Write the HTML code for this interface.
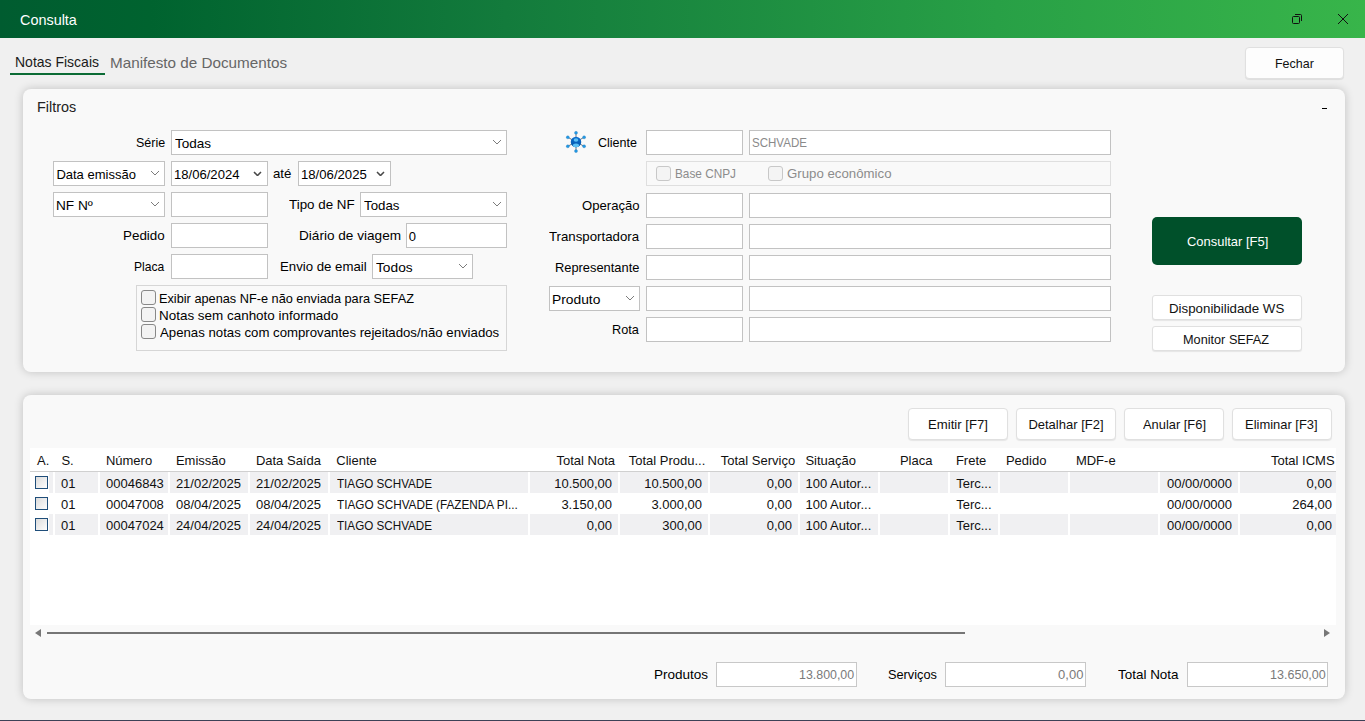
<!DOCTYPE html><html><head><meta charset="utf-8"><style>
html,body{margin:0;padding:0}
body{width:1365px;height:721px;overflow:hidden;position:relative;background:#f0f0f0;font-family:"Liberation Sans",sans-serif}
.t{position:absolute;white-space:pre;font-family:"Liberation Sans",sans-serif}
.b{position:absolute;box-sizing:border-box}
.r{position:absolute}
</style></head><body>
<div class="r" style="left:0;top:0;width:1365px;height:38px;background:linear-gradient(90deg,#005c30 0%,#00632f 11%,#137b3c 37%,#28a046 73%,#38b54a 100%)"></div>
<div class="t" style="top:12px;left:19.53px;font-size:15px;line-height:15px;color:#fff;transform:scaleX(0.9607);transform-origin:0 0;">Consulta</div>
<svg class="r" style="left:1290px;top:12px" width="16" height="14"><rect x="2.5" y="4.5" width="7" height="7" rx="1" fill="none" stroke="#111" stroke-width="1"/><path d="M5 2.5 H10.5 Q11.5 2.5 11.5 3.5 V9" fill="none" stroke="#111" stroke-width="1"/></svg>
<svg class="r" style="left:1337px;top:13px" width="12" height="12"><path d="M1 1 L11 11 M11 1 L1 11" stroke="#111" stroke-width="1"/></svg>
<div class="t" style="top:54px;left:15.28px;font-size:15px;line-height:15px;color:#1a1a1a;transform:scaleX(0.9332);transform-origin:0 0;">Notas Fiscais</div>
<div class="r" style="left:10px;top:73px;width:95px;height:2px;background:#0b6b35;"></div>
<div class="t" style="top:55px;left:110.18px;font-size:15px;line-height:15px;color:#666;transform:scaleX(1.0162);transform-origin:0 0;">Manifesto de Documentos</div>
<div class="b" style="left:1245px;top:47px;width:99px;height:32px;background:#fdfdfd;border:1px solid #e0e0e0;border-radius:4px;box-shadow:0 1px 1px rgba(0,0,0,0.08)"></div>
<div class="t" style="top:57px;left:1274.95px;font-size:13px;line-height:13px;color:#111;transform:scaleX(0.9591);transform-origin:0 0;">Fechar</div>
<div class="r" style="left:23px;top:89px;width:1322px;height:283px;background:#f9f9f9;border-radius:8px;box-shadow:0 0 10px rgba(0,0,0,0.2)"></div>
<div class="t" style="top:99px;left:36.95px;font-size:15px;line-height:15px;color:#222;transform:scaleX(0.9591);transform-origin:0 0;">Filtros</div>
<div class="r" style="left:1322px;top:108px;width:5px;height:1px;background:#000;"></div>
<div class="t" style="top:136px;left:135.62px;font-size:13px;line-height:13px;color:#000;transform:scaleX(0.9589);transform-origin:0 0;">Série</div>
<div class="b" style="left:171px;top:130px;width:336px;height:25px;background:#fff;border:1px solid #c2c2c2;"></div>
<svg class="r" style="left:492.0px;top:139.0px" width="10" height="6"><path d="M1 1 L5.0 5 L9 1" fill="none" stroke="#7c7c7c" stroke-width="1"/></svg>
<div class="t" style="top:137px;left:174.89px;font-size:13px;line-height:13px;color:#000;transform:scaleX(1.0413);transform-origin:0 0;">Todas</div>
<div class="b" style="left:53px;top:161px;width:112px;height:25px;background:#fff;border:1px solid #c2c2c2;"></div>
<svg class="r" style="left:150.0px;top:170.0px" width="10" height="6"><path d="M1 1 L5.0 5 L9 1" fill="none" stroke="#7c7c7c" stroke-width="1"/></svg>
<div class="t" style="top:168px;left:56.40px;font-size:13px;line-height:13px;color:#000;">Data emissão</div>
<div class="b" style="left:171px;top:161px;width:97px;height:25px;background:#fff;border:1px solid #c2c2c2;"></div>
<svg class="r" style="left:253.10000000000002px;top:170.79999999999998px" width="9" height="5.6"><path d="M1 1 L4.5 4.6 L8 1" fill="none" stroke="#484848" stroke-width="1.5"/></svg>
<div class="t" style="top:168px;left:173.89px;font-size:13px;line-height:13px;color:#000;transform:scaleX(1.0063);transform-origin:0 0;">18/06/2024</div>
<div class="t" style="top:167px;left:273.39px;font-size:13px;line-height:13px;color:#000;transform:scaleX(1.0176);transform-origin:0 0;">até</div>
<div class="b" style="left:298px;top:161px;width:93px;height:25px;background:#fff;border:1px solid #c2c2c2;"></div>
<svg class="r" style="left:375.9px;top:170.79999999999998px" width="9" height="5.6"><path d="M1 1 L4.5 4.6 L8 1" fill="none" stroke="#484848" stroke-width="1.5"/></svg>
<div class="t" style="top:168px;left:300.89px;font-size:13px;line-height:13px;color:#000;transform:scaleX(1.0110);transform-origin:0 0;">18/06/2025</div>
<div class="b" style="left:53px;top:192px;width:112px;height:25px;background:#fff;border:1px solid #c2c2c2;"></div>
<svg class="r" style="left:150.0px;top:201.0px" width="10" height="6"><path d="M1 1 L5.0 5 L9 1" fill="none" stroke="#7c7c7c" stroke-width="1"/></svg>
<div class="t" style="top:199px;left:56.34px;font-size:13px;line-height:13px;color:#000;transform:scaleX(1.0503);transform-origin:0 0;">NF Nº</div>
<div class="b" style="left:171px;top:192px;width:97px;height:25px;background:#fff;border:1px solid #c2c2c2;"></div>
<div class="t" style="top:198px;left:289.19px;font-size:13px;line-height:13px;color:#000;transform:scaleX(1.0286);transform-origin:0 0;">Tipo de NF</div>
<div class="b" style="left:360px;top:192px;width:147px;height:25px;background:#fff;border:1px solid #c2c2c2;"></div>
<svg class="r" style="left:492.0px;top:201.0px" width="10" height="6"><path d="M1 1 L5.0 5 L9 1" fill="none" stroke="#7c7c7c" stroke-width="1"/></svg>
<div class="t" style="top:199px;left:364.49px;font-size:13px;line-height:13px;color:#000;transform:scaleX(1.0206);transform-origin:0 0;">Todas</div>
<div class="t" style="top:229px;left:123.27px;font-size:13px;line-height:13px;color:#000;transform:scaleX(1.0309);transform-origin:0 0;">Pedido</div>
<div class="b" style="left:171px;top:223px;width:97px;height:25px;background:#fff;border:1px solid #c2c2c2;"></div>
<div class="t" style="top:229px;left:298.85px;font-size:13px;line-height:13px;color:#000;transform:scaleX(1.0460);transform-origin:0 0;">Diário de viagem</div>
<div class="b" style="left:406px;top:223px;width:101px;height:25px;background:#fff;border:1px solid #c2c2c2;"></div>
<div class="t" style="top:230px;left:408.80px;font-size:13px;line-height:13px;color:#000;">0</div>
<div class="t" style="top:260px;left:134.18px;font-size:13px;line-height:13px;color:#000;transform:scaleX(0.9299);transform-origin:0 0;">Placa</div>
<div class="b" style="left:171px;top:254px;width:97px;height:25px;background:#fff;border:1px solid #c2c2c2;"></div>
<div class="t" style="top:260px;left:279.88px;font-size:13px;line-height:13px;color:#000;transform:scaleX(1.0168);transform-origin:0 0;">Envio de email</div>
<div class="b" style="left:372px;top:254px;width:101px;height:25px;background:#fff;border:1px solid #c2c2c2;"></div>
<svg class="r" style="left:458.0px;top:263.0px" width="10" height="6"><path d="M1 1 L5.0 5 L9 1" fill="none" stroke="#7c7c7c" stroke-width="1"/></svg>
<div class="t" style="top:261px;left:376.28px;font-size:13px;line-height:13px;color:#000;transform:scaleX(1.0560);transform-origin:0 0;">Todos</div>
<div class="b" style="left:136px;top:285px;width:371px;height:66px;background:transparent;border:1px solid #d6d6d6;"></div>
<div class="b" style="left:141px;top:290px;width:15px;height:15px;background:#f3f3f3;border:1px solid #888;border-radius:3px"></div>
<div class="t" style="top:292px;left:159.32px;font-size:13px;line-height:13px;color:#000;transform:scaleX(0.9799);transform-origin:0 0;">Exibir apenas NF-e não enviada para SEFAZ</div>
<div class="b" style="left:141px;top:307px;width:15px;height:15px;background:#f3f3f3;border:1px solid #888;border-radius:3px"></div>
<div class="t" style="top:309px;left:159.26px;font-size:13px;line-height:13px;color:#000;transform:scaleX(1.0338);transform-origin:0 0;">Notas sem canhoto informado</div>
<div class="b" style="left:141px;top:324px;width:15px;height:15px;background:#f3f3f3;border:1px solid #888;border-radius:3px"></div>
<div class="t" style="top:326px;left:160.40px;font-size:13px;line-height:13px;color:#000;transform:scaleX(1.0159);transform-origin:0 0;">Apenas notas com comprovantes rejeitados/não enviados</div>
<svg class="r" style="left:562px;top:128px" width="28" height="28" viewBox="0 0 28 28">
<defs><clipPath id="cc"><circle cx="14" cy="14" r="5.2"/></clipPath>
<linearGradient id="cg" x1="0" y1="0" x2="0" y2="1"><stop offset="0" stop-color="#0a6ed1"/><stop offset="1" stop-color="#0857a8"/></linearGradient></defs>
<g stroke="#6b7b88" stroke-width="1" fill="none"><path d="M14 4.7V23.1M5.8 9.3L22.1 18.3M22.1 9.3L5.8 18.3"/></g>
<g fill="#1d9be8" stroke="#3a7fb8" stroke-width="0.4"><circle cx="14" cy="4.8" r="1.5"/><circle cx="14" cy="23.1" r="1.5"/><circle cx="5.8" cy="9.3" r="1.5"/><circle cx="22.1" cy="9.3" r="1.5"/><circle cx="5.8" cy="18.3" r="1.5"/><circle cx="22.1" cy="18.3" r="1.5"/></g>
<circle cx="14" cy="14" r="5.25" fill="url(#cg)"/>
<g clip-path="url(#cc)" fill="#5cc0f4"><ellipse cx="14" cy="12" rx="2.3" ry="1.8"/><ellipse cx="14" cy="17.6" rx="3.1" ry="2"/></g>
</svg>
<div class="t" style="top:136px;left:598.03px;font-size:13px;line-height:13px;color:#000;transform:scaleX(0.9643);transform-origin:0 0;">Cliente</div>
<div class="b" style="left:646px;top:130px;width:97px;height:25px;background:#fff;border:1px solid #c2c2c2;"></div>
<div class="b" style="left:749px;top:130px;width:362px;height:25px;background:#fff;border:1px solid #c2c2c2;"></div>
<div class="t" style="top:136px;left:751.87px;font-size:13px;line-height:13px;color:#8a8a8a;transform:scaleX(0.8880);transform-origin:0 0;">SCHVADE</div>
<div class="b" style="left:646px;top:161px;width:465px;height:25px;background:#f9f9f9;border:1px solid #dfdfdf;"></div>
<div class="b" style="left:656px;top:166px;width:15px;height:15px;background:#f4f4f4;border:1px solid #c8c8c8;border-radius:3px"></div>
<div class="t" style="top:167px;left:674.60px;font-size:13px;line-height:13px;color:#8c8c8c;transform:scaleX(0.9078);transform-origin:0 0;">Base CNPJ</div>
<div class="b" style="left:768px;top:166px;width:15px;height:15px;background:#f4f4f4;border:1px solid #c8c8c8;border-radius:3px"></div>
<div class="t" style="top:167px;left:786.99px;font-size:13px;line-height:13px;color:#8c8c8c;transform:scaleX(1.0187);transform-origin:0 0;">Grupo econômico</div>
<div class="t" style="top:199px;left:582.09px;font-size:13px;line-height:13px;color:#000;transform:scaleX(1.0089);transform-origin:0 0;">Operação</div>
<div class="b" style="left:646px;top:193px;width:97px;height:25px;background:#fff;border:1px solid #c2c2c2;"></div>
<div class="b" style="left:749px;top:193px;width:362px;height:25px;background:#fff;border:1px solid #c2c2c2;"></div>
<div class="t" style="top:230px;left:549.19px;font-size:13px;line-height:13px;color:#000;transform:scaleX(1.0182);transform-origin:0 0;">Transportadora</div>
<div class="b" style="left:646px;top:224px;width:97px;height:25px;background:#fff;border:1px solid #c2c2c2;"></div>
<div class="b" style="left:749px;top:224px;width:362px;height:25px;background:#fff;border:1px solid #c2c2c2;"></div>
<div class="t" style="top:261px;left:555.31px;font-size:13px;line-height:13px;color:#000;transform:scaleX(0.9892);transform-origin:0 0;">Representante</div>
<div class="b" style="left:646px;top:255px;width:97px;height:25px;background:#fff;border:1px solid #c2c2c2;"></div>
<div class="b" style="left:749px;top:255px;width:362px;height:25px;background:#fff;border:1px solid #c2c2c2;"></div>
<div class="b" style="left:549px;top:286px;width:91px;height:25px;background:#fff;border:1px solid #c2c2c2;"></div>
<svg class="r" style="left:625.0px;top:295.0px" width="10" height="6"><path d="M1 1 L5.0 5 L9 1" fill="none" stroke="#7c7c7c" stroke-width="1"/></svg>
<div class="t" style="top:293px;left:551.73px;font-size:13px;line-height:13px;color:#000;transform:scaleX(1.0615);transform-origin:0 0;">Produto</div>
<div class="b" style="left:646px;top:286px;width:97px;height:25px;background:#fff;border:1px solid #c2c2c2;"></div>
<div class="b" style="left:749px;top:286px;width:362px;height:25px;background:#fff;border:1px solid #c2c2c2;"></div>
<div class="t" style="top:323px;left:612.43px;font-size:13px;line-height:13px;color:#000;transform:scaleX(0.9772);transform-origin:0 0;">Rota</div>
<div class="b" style="left:646px;top:317px;width:97px;height:25px;background:#fff;border:1px solid #c2c2c2;"></div>
<div class="b" style="left:749px;top:317px;width:362px;height:25px;background:#fff;border:1px solid #c2c2c2;"></div>
<div class="r" style="left:1152px;top:217px;width:150px;height:48px;background:#00502a;border-radius:5px"></div>
<div class="t" style="top:235px;left:1186.70px;font-size:13px;line-height:13px;color:#fff;transform:scaleX(0.9950);transform-origin:0 0;">Consultar [F5]</div>
<div class="b" style="left:1152px;top:295px;width:150px;height:25px;background:#fff;border:1px solid #e0e0e0;border-radius:3px;box-shadow:0 1px 1px rgba(0,0,0,0.08)"></div>
<div class="t" style="top:302px;left:1169.08px;font-size:13px;line-height:13px;color:#111;transform:scaleX(1.0225);transform-origin:0 0;">Disponibilidade WS</div>
<div class="b" style="left:1152px;top:326px;width:150px;height:25px;background:#fff;border:1px solid #e0e0e0;border-radius:3px;box-shadow:0 1px 1px rgba(0,0,0,0.08)"></div>
<div class="t" style="top:333px;left:1183.33px;font-size:13px;line-height:13px;color:#111;transform:scaleX(0.9769);transform-origin:0 0;">Monitor SEFAZ</div>
<div class="r" style="left:23px;top:395px;width:1322px;height:304px;background:#f9f9f9;border-radius:8px;box-shadow:0 0 10px rgba(0,0,0,0.2)"></div>
<div class="b" style="left:908px;top:408px;width:100px;height:32px;background:#fff;border:1px solid #e0e0e0;border-radius:4px;box-shadow:0 1px 1px rgba(0,0,0,0.08)"></div>
<div class="t" style="top:418px;left:927.89px;font-size:13px;line-height:13px;color:#111;transform:scaleX(1.0122);transform-origin:0 0;">Emitir [F7]</div>
<div class="b" style="left:1016px;top:408px;width:100px;height:32px;background:#fff;border:1px solid #e0e0e0;border-radius:4px;box-shadow:0 1px 1px rgba(0,0,0,0.08)"></div>
<div class="t" style="top:418px;left:1028.40px;font-size:13px;line-height:13px;color:#111;">Detalhar [F2]</div>
<div class="b" style="left:1124px;top:408px;width:100px;height:32px;background:#fff;border:1px solid #e0e0e0;border-radius:4px;box-shadow:0 1px 1px rgba(0,0,0,0.08)"></div>
<div class="t" style="top:418px;left:1142.90px;font-size:13px;line-height:13px;color:#111;transform:scaleX(0.9904);transform-origin:0 0;">Anular [F6]</div>
<div class="b" style="left:1232px;top:408px;width:100px;height:32px;background:#fff;border:1px solid #e0e0e0;border-radius:4px;box-shadow:0 1px 1px rgba(0,0,0,0.08)"></div>
<div class="t" style="top:418px;left:1244.70px;font-size:13px;line-height:13px;color:#111;transform:scaleX(0.9958);transform-origin:0 0;">Eliminar [F3]</div>
<div class="r" style="left:30px;top:448px;width:1306px;height:177px;background:#fff;"></div>
<div class="r" style="left:30px;top:471px;width:1306px;height:1px;background:#d0d0d0;"></div>
<div class="t" style="top:454px;left:37.00px;font-size:13px;line-height:13px;color:#111;">A.</div>
<div class="t" style="top:454px;left:61.40px;font-size:13px;line-height:13px;color:#111;">S.</div>
<div class="t" style="top:454px;left:105.90px;font-size:13px;line-height:13px;color:#111;">Número</div>
<div class="t" style="top:454px;left:175.90px;font-size:13px;line-height:13px;color:#111;">Emissão</div>
<div class="t" style="top:454px;left:255.90px;font-size:13px;line-height:13px;color:#111;">Data Saída</div>
<div class="t" style="top:454px;left:336.30px;font-size:13px;line-height:13px;color:#111;">Cliente</div>
<div class="t" style="top:454px;left:556.50px;font-size:13px;line-height:13px;color:#111;">Total Nota</div>
<div class="t" style="top:454px;left:628.70px;font-size:13px;line-height:13px;color:#111;">Total Produ...</div>
<div class="t" style="top:454px;left:720.70px;font-size:13px;line-height:13px;color:#111;">Total Serviço</div>
<div class="t" style="top:454px;left:805.40px;font-size:13px;line-height:13px;color:#111;">Situação</div>
<div class="t" style="top:454px;left:899.90px;font-size:13px;line-height:13px;color:#111;">Placa</div>
<div class="t" style="top:454px;left:955.90px;font-size:13px;line-height:13px;color:#111;">Frete</div>
<div class="t" style="top:454px;left:1005.90px;font-size:13px;line-height:13px;color:#111;">Pedido</div>
<div class="t" style="top:454px;left:1075.90px;font-size:13px;line-height:13px;color:#111;">MDF-e</div>
<div class="t" style="top:454px;left:1271.00px;font-size:13px;line-height:13px;color:#111;">Total ICMS</div>
<div class="r" style="left:49px;top:472px;width:4px;height:21px;background:#f0f0f2;"></div>
<div class="r" style="left:55px;top:472px;width:43px;height:21px;background:#f0f0f2;"></div>
<div class="r" style="left:100px;top:472px;width:68px;height:21px;background:#f0f0f2;"></div>
<div class="r" style="left:170px;top:472px;width:78px;height:21px;background:#f0f0f2;"></div>
<div class="r" style="left:250px;top:472px;width:78px;height:21px;background:#f0f0f2;"></div>
<div class="r" style="left:330px;top:472px;width:198px;height:21px;background:#f0f0f2;"></div>
<div class="r" style="left:530px;top:472px;width:88px;height:21px;background:#f0f0f2;"></div>
<div class="r" style="left:620px;top:472px;width:88px;height:21px;background:#f0f0f2;"></div>
<div class="r" style="left:710px;top:472px;width:88px;height:21px;background:#f0f0f2;"></div>
<div class="r" style="left:800px;top:472px;width:78px;height:21px;background:#f0f0f2;"></div>
<div class="r" style="left:880px;top:472px;width:68px;height:21px;background:#f0f0f2;"></div>
<div class="r" style="left:950px;top:472px;width:48px;height:21px;background:#f0f0f2;"></div>
<div class="r" style="left:1000px;top:472px;width:68px;height:21px;background:#f0f0f2;"></div>
<div class="r" style="left:1070px;top:472px;width:88px;height:21px;background:#f0f0f2;"></div>
<div class="r" style="left:1160px;top:472px;width:78px;height:21px;background:#f0f0f2;"></div>
<div class="r" style="left:1240px;top:472px;width:96px;height:21px;background:#f0f0f2;"></div>
<div class="b" style="left:35px;top:476px;width:13px;height:13px;border:1px solid #1f4e7a;background:linear-gradient(135deg,#dcdcdc,#fdfdfd)"></div>
<div class="t" style="top:477px;left:61.00px;font-size:13px;line-height:13px;color:#111;">01</div>
<div class="t" style="top:477px;left:106.00px;font-size:13px;line-height:13px;color:#111;">00046843</div>
<div class="t" style="top:477px;left:175.90px;font-size:13px;line-height:13px;color:#111;">21/02/2025</div>
<div class="t" style="top:477px;left:255.90px;font-size:13px;line-height:13px;color:#111;">21/02/2025</div>
<div class="t" style="top:477px;left:336.73px;font-size:13px;line-height:13px;color:#111;transform:scaleX(0.8972);transform-origin:0 0;">TIAGO SCHVADE</div>
<div class="t" style="top:477px;left:554.20px;font-size:13px;line-height:13px;color:#111;">10.500,00</div>
<div class="t" style="top:477px;left:644.20px;font-size:13px;line-height:13px;color:#111;">10.500,00</div>
<div class="t" style="top:477px;left:766.70px;font-size:13px;line-height:13px;color:#111;">0,00</div>
<div class="t" style="top:477px;left:805.50px;font-size:13px;line-height:13px;color:#111;">100 Autor...</div>
<div class="t" style="top:477px;left:956.20px;font-size:13px;line-height:13px;color:#111;">Terc...</div>
<div class="t" style="top:477px;left:1167.00px;font-size:13px;line-height:13px;color:#111;">00/00/0000</div>
<div class="t" style="top:477px;left:1306.60px;font-size:13px;line-height:13px;color:#111;">0,00</div>
<div class="b" style="left:35px;top:497px;width:13px;height:13px;border:1px solid #1f4e7a;background:linear-gradient(135deg,#dcdcdc,#fdfdfd)"></div>
<div class="t" style="top:498px;left:61.00px;font-size:13px;line-height:13px;color:#111;">01</div>
<div class="t" style="top:498px;left:106.00px;font-size:13px;line-height:13px;color:#111;">00047008</div>
<div class="t" style="top:498px;left:176.00px;font-size:13px;line-height:13px;color:#111;">08/04/2025</div>
<div class="t" style="top:498px;left:256.00px;font-size:13px;line-height:13px;color:#111;">08/04/2025</div>
<div class="t" style="top:498px;left:336.73px;font-size:13px;line-height:13px;color:#111;transform:scaleX(0.9042);transform-origin:0 0;">TIAGO SCHVADE (FAZENDA PI...</div>
<div class="t" style="top:498px;left:561.40px;font-size:13px;line-height:13px;color:#111;">3.150,00</div>
<div class="t" style="top:498px;left:651.40px;font-size:13px;line-height:13px;color:#111;">3.000,00</div>
<div class="t" style="top:498px;left:766.70px;font-size:13px;line-height:13px;color:#111;">0,00</div>
<div class="t" style="top:498px;left:805.50px;font-size:13px;line-height:13px;color:#111;">100 Autor...</div>
<div class="t" style="top:498px;left:956.20px;font-size:13px;line-height:13px;color:#111;">Terc...</div>
<div class="t" style="top:498px;left:1167.00px;font-size:13px;line-height:13px;color:#111;">00/00/0000</div>
<div class="t" style="top:498px;left:1292.20px;font-size:13px;line-height:13px;color:#111;">264,00</div>
<div class="r" style="left:49px;top:514px;width:4px;height:21px;background:#f0f0f2;"></div>
<div class="r" style="left:55px;top:514px;width:43px;height:21px;background:#f0f0f2;"></div>
<div class="r" style="left:100px;top:514px;width:68px;height:21px;background:#f0f0f2;"></div>
<div class="r" style="left:170px;top:514px;width:78px;height:21px;background:#f0f0f2;"></div>
<div class="r" style="left:250px;top:514px;width:78px;height:21px;background:#f0f0f2;"></div>
<div class="r" style="left:330px;top:514px;width:198px;height:21px;background:#f0f0f2;"></div>
<div class="r" style="left:530px;top:514px;width:88px;height:21px;background:#f0f0f2;"></div>
<div class="r" style="left:620px;top:514px;width:88px;height:21px;background:#f0f0f2;"></div>
<div class="r" style="left:710px;top:514px;width:88px;height:21px;background:#f0f0f2;"></div>
<div class="r" style="left:800px;top:514px;width:78px;height:21px;background:#f0f0f2;"></div>
<div class="r" style="left:880px;top:514px;width:68px;height:21px;background:#f0f0f2;"></div>
<div class="r" style="left:950px;top:514px;width:48px;height:21px;background:#f0f0f2;"></div>
<div class="r" style="left:1000px;top:514px;width:68px;height:21px;background:#f0f0f2;"></div>
<div class="r" style="left:1070px;top:514px;width:88px;height:21px;background:#f0f0f2;"></div>
<div class="r" style="left:1160px;top:514px;width:78px;height:21px;background:#f0f0f2;"></div>
<div class="r" style="left:1240px;top:514px;width:96px;height:21px;background:#f0f0f2;"></div>
<div class="b" style="left:35px;top:518px;width:13px;height:13px;border:1px solid #1f4e7a;background:linear-gradient(135deg,#dcdcdc,#fdfdfd)"></div>
<div class="t" style="top:519px;left:61.00px;font-size:13px;line-height:13px;color:#111;">01</div>
<div class="t" style="top:519px;left:106.00px;font-size:13px;line-height:13px;color:#111;">00047024</div>
<div class="t" style="top:519px;left:175.90px;font-size:13px;line-height:13px;color:#111;">24/04/2025</div>
<div class="t" style="top:519px;left:255.90px;font-size:13px;line-height:13px;color:#111;">24/04/2025</div>
<div class="t" style="top:519px;left:336.73px;font-size:13px;line-height:13px;color:#111;transform:scaleX(0.8972);transform-origin:0 0;">TIAGO SCHVADE</div>
<div class="t" style="top:519px;left:586.70px;font-size:13px;line-height:13px;color:#111;">0,00</div>
<div class="t" style="top:519px;left:662.30px;font-size:13px;line-height:13px;color:#111;">300,00</div>
<div class="t" style="top:519px;left:766.70px;font-size:13px;line-height:13px;color:#111;">0,00</div>
<div class="t" style="top:519px;left:805.50px;font-size:13px;line-height:13px;color:#111;">100 Autor...</div>
<div class="t" style="top:519px;left:956.20px;font-size:13px;line-height:13px;color:#111;">Terc...</div>
<div class="t" style="top:519px;left:1167.00px;font-size:13px;line-height:13px;color:#111;">00/00/0000</div>
<div class="t" style="top:519px;left:1306.60px;font-size:13px;line-height:13px;color:#111;">0,00</div>
<svg class="r" style="left:34px;top:628px" width="8" height="10"><path d="M7 1 V9 L1 5 Z" fill="#777"/></svg>
<div class="r" style="left:47px;top:632px;width:918px;height:2px;background:#767676;"></div>
<svg class="r" style="left:1323px;top:628px" width="8" height="10"><path d="M1 1 V9 L7 5 Z" fill="#777"/></svg>
<div class="t" style="top:668px;left:654.06px;font-size:13px;line-height:13px;color:#000;transform:scaleX(1.0397);transform-origin:0 0;">Produtos</div>
<div class="b" style="left:716px;top:662px;width:141px;height:25px;background:#fff;border:1px solid #c8c8c8;"></div>
<div class="t" style="top:668px;left:799.05px;font-size:13px;line-height:13px;color:#7a7a7a;transform:scaleX(0.9538);transform-origin:0 0;">13.800,00</div>
<div class="t" style="top:668px;left:887.91px;font-size:13px;line-height:13px;color:#000;transform:scaleX(0.9815);transform-origin:0 0;">Serviços</div>
<div class="b" style="left:945px;top:662px;width:141px;height:25px;background:#fff;border:1px solid #c8c8c8;"></div>
<div class="t" style="top:668px;left:1058.10px;font-size:13px;line-height:13px;color:#7a7a7a;">0,00</div>
<div class="t" style="top:668px;left:1118.09px;font-size:13px;line-height:13px;color:#000;transform:scaleX(1.0344);transform-origin:0 0;">Total Nota</div>
<div class="b" style="left:1187px;top:662px;width:141px;height:25px;background:#fff;border:1px solid #c8c8c8;"></div>
<div class="t" style="top:668px;left:1269.64px;font-size:13px;line-height:13px;color:#7a7a7a;transform:scaleX(0.9645);transform-origin:0 0;">13.650,00</div>
<div class="r" style="left:0px;top:720px;width:1365px;height:1px;background:#3c4156;"></div>
</body></html>
